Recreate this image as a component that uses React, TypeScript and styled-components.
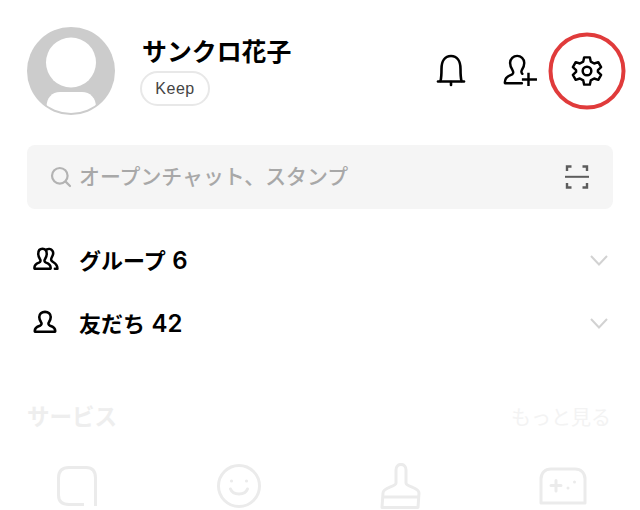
import React from 'react'
import styled, { createGlobalStyle } from 'styled-components'

const GlobalStyle = createGlobalStyle`
  html, body {
    margin: 0;
    padding: 0;
    background: #fff;
  }
  body {
    font-family: "Liberation Sans", "Noto Sans CJK JP", sans-serif;
  }
`

function Avatar() {
  return (
    <svg width="88" height="88" viewBox="0 0 88 88">
      <defs>
        <clipPath id="avatarClip">
          <circle cx="44" cy="43.5" r="42.5" />
        </clipPath>
      </defs>
      <circle cx="44" cy="44" r="44" fill="#cccccc" />
      <circle cx="44" cy="35.5" r="25" fill="#fff" />
      <g clipPath="url(#avatarClip)">
        <path d="M19.5 80 C19.5 71 25 65 33 65 H55 C63 65 69 71 69 80 V92 H19.5 Z" fill="#fff" />
      </g>
    </svg>
  )
}

function Bell() {
  return (
    <svg width="30" height="34" viewBox="0 0 30 34" fill="none" stroke="#000" strokeWidth="2.6" strokeLinecap="round" strokeLinejoin="round">
      <path d="M4.5 27 C5.3 24 5.5 21 5.5 15 C5.5 7 9 2 15 2 C21 2 24.5 7 24.5 15 C24.5 21 24.7 24 25.5 27" />
      <path d="M2 27.5 H28" />
      <path d="M15 28 V31" />
    </svg>
  )
}

function AddFriend() {
  return (
    <svg width="36" height="33" viewBox="0 0 38 35" fill="none" stroke="#000" strokeWidth="2.6" strokeLinecap="round" strokeLinejoin="round">
      <path d="M21 31 H3 C2.5 26 5 24 9 22.5 C12 21.3 12.5 19.5 11 17 C9 14 8.5 12 8.5 9.5 C8.5 5 12 2 16 2 C20 2 23.5 5 23.5 9.5 C23.5 12 23 14 21 17 C20.2 18.5 20.5 20 21.5 21" />
      <path d="M28 20 V34 M21 27 H37" strokeLinecap="butt" />
    </svg>
  )
}

function Gear() {
  return (
    <svg width="32" height="32" viewBox="0 0 34 34" fill="none" stroke="#000" strokeWidth="2.6" strokeLinejoin="round">
      <path d="M14 2.5 H20 L21 7 L24.6 9 L29 7.6 L32 12.8 L28.6 16 V18 L32 21.2 L29 26.4 L24.6 25 L21 27 L20 31.5 H14 L13 27 L9.4 25 L5 26.4 L2 21.2 L5.4 18 V16 L2 12.8 L5 7.6 L9.4 9 L13 7 Z" />
      <circle cx="17" cy="17" r="4.6" />
    </svg>
  )
}

function SearchGlass() {
  return (
    <svg width="22" height="22" viewBox="0 0 22 22" fill="none" stroke="#b3b3b3" strokeWidth="2.2" strokeLinecap="round">
      <circle cx="9.8" cy="9.8" r="7.8" />
      <path d="M15.6 15.6 L20 20" />
    </svg>
  )
}

function Scan() {
  return (
    <svg width="24" height="26" viewBox="0 0 24 26" fill="none" stroke="#5c5c5c" strokeWidth="2.4">
      <path d="M2 7 V2.5 H6.5 M17.5 2.5 H22 V7 M2 19 V23.5 H6.5 M17.5 23.5 H22 V19" />
      <path d="M0 12.8 H24" strokeWidth="2" />
    </svg>
  )
}

function GroupIcon() {
  return (
    <svg width="26" height="24" viewBox="0 0 28 26" fill="none" stroke="#000" strokeWidth="2.7" strokeLinecap="round" strokeLinejoin="round">
      <path d="M1.5 23.5 H19 C19.5 19.5 17 18 14 17 C12 16.2 12 14.5 13 13 C14.2 11 14.8 9.5 14.8 7.5 C14.8 4 12.8 2 10.2 2 C7.6 2 5.6 4 5.6 7.5 C5.6 9.5 6.2 11 7.4 13 C8.4 14.5 8.4 16.2 6.4 17 C3.4 18 1 19.5 1.5 23.5 Z" />
      <path d="M15 2.6 C16.4 1.8 19 1.8 20.4 3.4 C22 5 22 8 20.6 10.4 C19.6 12.2 19 13.6 20 15 C21.4 17 26.4 17.4 26.4 23.5 H23.6" />
    </svg>
  )
}

function FriendIcon() {
  return (
    <svg width="24" height="24" viewBox="0 0 26 26" fill="none" stroke="#000" strokeWidth="2.8" strokeLinecap="round" strokeLinejoin="round">
      <path d="M2 23.5 H24 C24.5 19.5 22 18 18.5 17 C16.4 16.2 16.4 14.5 17.4 13 C18.6 11 19.2 9.5 19.2 7.5 C19.2 4 16.6 2 13 2 C9.4 2 6.8 4 6.8 7.5 C6.8 9.5 7.4 11 8.6 13 C9.6 14.5 9.6 16.2 7.5 17 C4 18 1.5 19.5 2 23.5 Z" />
    </svg>
  )
}

function Chevron() {
  return (
    <svg width="18" height="11" viewBox="0 0 18 11" fill="none" stroke="#d2d2d2" strokeWidth="2">
      <path d="M1 1 L9 9.5 L17 1" />
    </svg>
  )
}

function NoteIcon() {
  return (
    <svg width="40" height="40" viewBox="0 0 40 40" fill="none" stroke="#ebebeb" strokeWidth="3">
      <path d="M38.5 40 V12 C38.5 5 35 1.5 29 1.5 H12 C5 1.5 1.5 5 1.5 12 V29 C1.5 35 5 38.5 12 38.5 H27" />
    </svg>
  )
}

function SmileIcon() {
  return (
    <svg width="46" height="46" viewBox="0 0 46 46" fill="none" stroke="#ebebeb" strokeWidth="3" strokeLinecap="round">
      <circle cx="23" cy="23" r="20.5" />
      <path d="M14.5 26 C17 32.5 29 32.5 31.5 26" />
      <circle cx="15.5" cy="18" r="1.6" fill="#ebebeb" stroke="none" />
      <circle cx="30.5" cy="18" r="1.6" fill="#ebebeb" stroke="none" />
    </svg>
  )
}

function BrushIcon() {
  return (
    <svg width="42" height="46" viewBox="0 0 42 46" fill="none" stroke="#ebebeb" strokeWidth="3" strokeLinejoin="round">
      <path d="M16 20 V7 C16 -0.5 26 -0.5 26 7 V20 C26 24 39 24 39 30 L38 44.5 H2 L3 30 C3 24 16 24 16 20 Z" />
      <path d="M3 34 H39" />
    </svg>
  )
}

function GameIcon() {
  return (
    <svg width="48" height="38" viewBox="0 0 48 38" fill="none" stroke="#ebebeb" strokeWidth="3" strokeLinejoin="round">
      <path d="M2 36 V12 C2 6 6 2 12 2 H36 C42 2 46 6 46 12 V36 Z" />
      <path d="M12 18.5 H22 M17 13.5 V24" strokeLinecap="round" />
      <circle cx="29" cy="21" r="1.5" fill="#ebebeb" stroke="none" />
      <circle cx="35.5" cy="15" r="1.5" fill="#ebebeb" stroke="none" />
    </svg>
  )
}

export default function App(): JSX.Element {
  return (
    <>
      <GlobalStyle />
      <Page>
        <Header>
          <AvatarWrap>
            <Avatar />
          </AvatarWrap>
          <Profile>
            <Name>サンクロ花子</Name>
            <KeepPill>Keep</KeepPill>
          </Profile>
          <HeaderActions>
            <ActionSlot width={36}>
              <Bell />
            </ActionSlot>
            <ActionSlot width={36}>
              <AddFriend />
            </ActionSlot>
            <ActionSlot width={32}>
              <Gear />
              <Highlight />
            </ActionSlot>
          </HeaderActions>
        </Header>

        <SearchBar>
          <SearchGlass />
          <SearchText>オープンチャット、スタンプ</SearchText>
          <Scan />
        </SearchBar>

        <RowList>
          <Row>
            <RowIcon>
              <GroupIcon />
            </RowIcon>
            <RowLabel>
              グループ <Count>6</Count>
            </RowLabel>
            <Chevron />
          </Row>
          <Row>
            <RowIcon>
              <FriendIcon />
            </RowIcon>
            <RowLabel>
              友だち <Count>42</Count>
            </RowLabel>
            <Chevron />
          </Row>
        </RowList>

        <ServiceHead>
          <ServiceTitle>サービス</ServiceTitle>
          <MoreLink>もっと見る</MoreLink>
        </ServiceHead>
        <ServiceGrid>
          <ServiceCell>
            <NoteIcon />
          </ServiceCell>
          <ServiceCell>
            <SmileIcon />
          </ServiceCell>
          <ServiceCell>
            <BrushIcon />
          </ServiceCell>
          <ServiceCell>
            <GameIcon />
          </ServiceCell>
        </ServiceGrid>
      </Page>
    </>
  )
}

const Page = styled.div`
  width: 640px;
  height: 510px;
  overflow: hidden;
  background: #fff;
  box-sizing: border-box;
  padding: 27px 27px 0;
`

const Header = styled.div`
  display: flex;
  align-items: flex-start;
  height: 88px;
`

const AvatarWrap = styled.div`
  width: 88px;
  height: 88px;
  flex-shrink: 0;
`

const Profile = styled.div`
  display: flex;
  flex-direction: column;
  align-items: flex-start;
  margin-left: 25px;
  flex: 1;
`

const Name = styled.div`
  margin: 10px 0 0 2px;
  font-size: 24.9px;
  line-height: 30px;
  font-weight: 700;
  color: #000;
  white-space: nowrap;
`

const KeepPill = styled.div`
  margin-top: 4px;
  box-sizing: border-box;
  width: 70px;
  height: 35px;
  border: 2px solid #e8e8e8;
  border-radius: 18px;
  display: flex;
  align-items: center;
  justify-content: center;
  font-size: 16px;
  letter-spacing: 0.5px;
  color: #444;
`

const HeaderActions = styled.div`
  display: flex;
  align-items: center;
  gap: 33px;
  height: 87px;
  padding-right: 10px;
`

const ActionSlot = styled.div<{ width: number }>`
  position: relative;
  width: ${(props) => props.width}px;
  display: flex;
  align-items: center;
  justify-content: center;

  svg {
    display: block;
  }
`

const Highlight = styled.div`
  position: absolute;
  left: 50%;
  top: 50%;
  width: 77px;
  height: 77px;
  box-sizing: border-box;
  transform: translate(-50%, -50%);
  border: 4px solid #e03b3b;
  border-radius: 50%;
`

const SearchBar = styled.div`
  margin-top: 30px;
  height: 64px;
  box-sizing: border-box;
  padding: 0 24px 0 23px;
  background: #f5f5f5;
  border-radius: 8px;
  display: flex;
  align-items: center;
`

const SearchText = styled.div`
  flex: 1;
  margin: 0 0 4px 7px;
  font-size: 20.9px;
  font-weight: 500;
  color: #a8a8a8;
  white-space: nowrap;
`

const RowList = styled.div`
  margin-top: 20px;
`

const Row = styled.div`
  height: 63px;
  display: flex;
  align-items: center;
  padding-right: 5px;
`

const RowIcon = styled.div`
  width: 52px;
  padding-left: 6px;
  margin-bottom: 3px;
  box-sizing: border-box;
  display: flex;

  svg {
    display: block;
  }
`

const RowLabel = styled.div`
  flex: 1;
  font-family: Inter, "Noto Sans CJK JP", sans-serif;
  font-size: 22px;
  line-height: 30px;
  font-weight: 600;
  color: #000;
  white-space: nowrap;
`

const Count = styled.span`
  font-size: 24px;
  margin-left: 1px;
`

const ServiceHead = styled.div`
  margin-top: 46px;
  display: flex;
  justify-content: space-between;
  align-items: center;
  height: 30px;
  padding-right: 2px;
`

const ServiceTitle = styled.div`
  font-size: 22.5px;
  margin-bottom: 2px;
  font-weight: 700;
  color: #eeeeee;
`

const MoreLink = styled.div`
  font-size: 20px;
  color: #f3f3f3;
`

const ServiceGrid = styled.div`
  margin: 32px -31px 0;
  display: grid;
  grid-template-columns: repeat(4, 1fr);
`

const ServiceCell = styled.div`
  display: flex;
  justify-content: center;
  align-items: center;
  height: 46px;

  svg {
    display: block;
  }
`
